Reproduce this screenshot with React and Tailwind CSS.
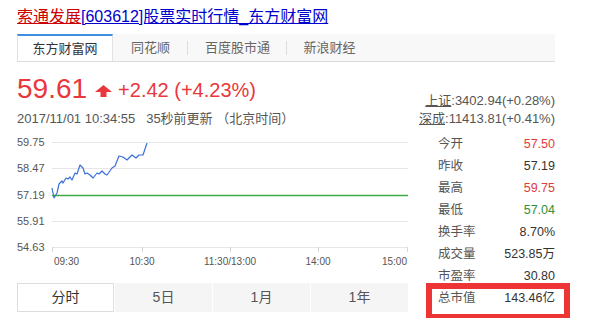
import React from 'react';

const FONT = { fontFamily: '"Liberation Sans", "Noto Sans CJK SC", sans-serif' };

const TABS = [
  { name: '东方财富网', w: 'w-[96px]', active: true },
  { name: '同花顺', w: 'w-[75px]' },
  { name: '百度股市通', w: 'w-[99px]' },
  { name: '新浪财经', w: 'w-[85px]' },
];

const STATS = [
  { label: '今开', value: '57.50', color: 'text-[#e23b3b]' },
  { label: '昨收', value: '57.19', color: 'text-[#333]' },
  { label: '最高', value: '59.75', color: 'text-[#e23b3b]' },
  { label: '最低', value: '57.04', color: 'text-[#2f8f3a]' },
  { label: '换手率', value: '8.70%', color: 'text-[#333]' },
  { label: '成交量', value: '523.85万', color: 'text-[#333]' },
  { label: '市盈率', value: '30.80', color: 'text-[#333]' },
  { label: '总市值', value: '143.46亿', color: 'text-[#333]' },
];

const PERIODS = ['分时', '5日', '1月', '1年'];

// intraday path, chart coords
const LINE = '35,57 37,67 40,62 42,53 45,50 46,52 49,47 51,48 53,46 55,49 58,42 60,43 63,34 66,37 68,43 70,42 73,44 76,47 80,42 82,43 85,40 88,43 90,44 95,37 98,35 102,25 106,26 110,29 115,24 119,27 122,24 126,24 130,12';

const GRID_Y = [
  { y: 11, label: '59.75' },
  { y: 37, label: '58.47' },
  { y: 64, label: '57.19' },
  { y: 90, label: '55.91' },
  { y: 116, label: '54.63' },
];

function Chart() {
  return (
    <svg width="391" height="138" className="block">
      {GRID_Y.map(g => (
        <g key={g.label}>
          {g.y !== 64 && <line x1="35" x2="391" y1={g.y + 0.5} y2={g.y + 0.5} stroke="#e6e6e6" />}
          <text x="0" y={g.y + 4} fontSize="11" fill="#555" fontFamily="Liberation Sans, sans-serif">{g.label}</text>
        </g>
      ))}
      <line x1="35" x2="391" y1="64.5" y2="64.5" stroke="rgb(60,170,70)" strokeWidth="1.3" />
      {[35.5, 125.5, 213.5, 301.5, 390.5].map(x => (
        <line key={x} x1={x} x2={x} y1="116" y2="121" stroke="#d6d6d6" />
      ))}
      <text x="37" y="134" fontSize="10" fill="#555" fontFamily="Liberation Sans, sans-serif">09:30</text>
      <text x="125" y="134" fontSize="10" fill="#555" textAnchor="middle" fontFamily="Liberation Sans, sans-serif">10:30</text>
      <text x="213" y="134" fontSize="10" fill="#555" textAnchor="middle" fontFamily="Liberation Sans, sans-serif">11:30/13:00</text>
      <text x="301" y="134" fontSize="10" fill="#555" textAnchor="middle" fontFamily="Liberation Sans, sans-serif">14:00</text>
      <text x="390" y="134" fontSize="10" fill="#555" textAnchor="end" fontFamily="Liberation Sans, sans-serif">15:00</text>
      <polyline points={LINE} fill="none" stroke="#3a6fd8" strokeWidth="1.2" strokeLinejoin="round" />
    </svg>
  );
}

export default function App() {
  return (
    <div className="relative w-[591px] h-[318px] overflow-hidden bg-white" style={FONT}>
      {/* title link */}
      <div className="pl-[17px] pt-[7px] text-[16px] leading-[20px]">
        <span className="text-[#cc0000] underline">索通发展</span>
        <span className="text-[#0000cc] underline">[603612]股票实时行情_东方财富网</span>
      </div>

      {/* source tabs */}
      <div className="ml-[17px] mt-[7px] w-[538px] h-[28px] flex bg-[#f8f8f8] border-b border-[#dcdcdc]">
        {TABS.map((t, i) => (
          <div key={t.name} className="flex items-center">
            {t.active ? (
              <div className={`${t.w} h-[27px] bg-white border-t-2 border-[#3d8ee0] border-l border-r border-l-[#e3e3e3] border-r-[#e3e3e3] flex items-center justify-center text-[13px] text-[#333]`}>
                {t.name}
              </div>
            ) : (
              <div className={`${t.w} h-[27px] flex items-center justify-center text-[13px] text-[#666] relative`}>
                {t.name}
                {i < 3 && <span className="absolute right-0 top-[7px] h-[14px] w-px bg-[#dddddd]" />}
              </div>
            )}
          </div>
        ))}
      </div>

      <div className="flex">
        {/* left column */}
        <div className="pl-[17px] w-[408px]">
          <div className="mt-[11px] h-[32px] flex items-center text-[#e8383d]">
            <span className="text-[28px] leading-[32px]">59.61</span>
            <svg width="17" height="12" viewBox="0 0 17 12" className="ml-[8px] mt-[3px]">
              <polygon points="8.5,0 17,7 11.5,7 11.5,12 5.5,12 5.5,7 0,7" fill="#e8383d" />
            </svg>
            <span className="ml-[6px] text-[20px] leading-[24px] mt-[2px]">+2.42 (+4.23%)</span>
          </div>
          <div className="mt-[6px] h-[16px] text-[13px] leading-[16px] text-[#555] whitespace-pre">
            2017/11/01 10:34:55   35秒前更新 （北京时间）
          </div>
          <div className="mt-[4px]">
            <Chart />
          </div>
          <div className="mt-[14px] w-[391px] h-[29px] flex bg-[#f5f5f5]">
            {PERIODS.map((p, i) => (
              <div
                key={p}
                className={
                  i === 0
                    ? 'w-[97px] flex items-center justify-center bg-white border border-[#dddddd] text-[14px] text-[#333]'
                    : 'flex-1 flex items-center justify-center text-[14px] text-[#555] border-l border-white'
                }
              >
                {p}
              </div>
            ))}
          </div>
        </div>

        {/* right column */}
        <div className="w-[147px] pt-[30px] text-[#555]">
          <div className="text-right text-[13px] leading-[18px]">
            <span className="underline">上证</span>:3402.94(+0.28%)
          </div>
          <div className="text-right text-[13px] leading-[18px]">
            <span className="underline">深成</span>:11413.81(+0.41%)
          </div>
          <div className="mt-[5px] pl-[30px]">
            {STATS.map(s => (
              <div key={s.label} className="h-[22px] flex items-center justify-between text-[12.5px]">
                <span className="text-[#555]">{s.label}</span>
                <span className={s.color}>{s.value}</span>
              </div>
            ))}
          </div>
        </div>
      </div>

      {/* annotation box drawn over the 总市值 row */}
      <div className="absolute left-[426px] top-[283px] w-[144px] h-[37px] border-[6px] border-[#ee3535] pointer-events-none" />
    </div>
  );
}
